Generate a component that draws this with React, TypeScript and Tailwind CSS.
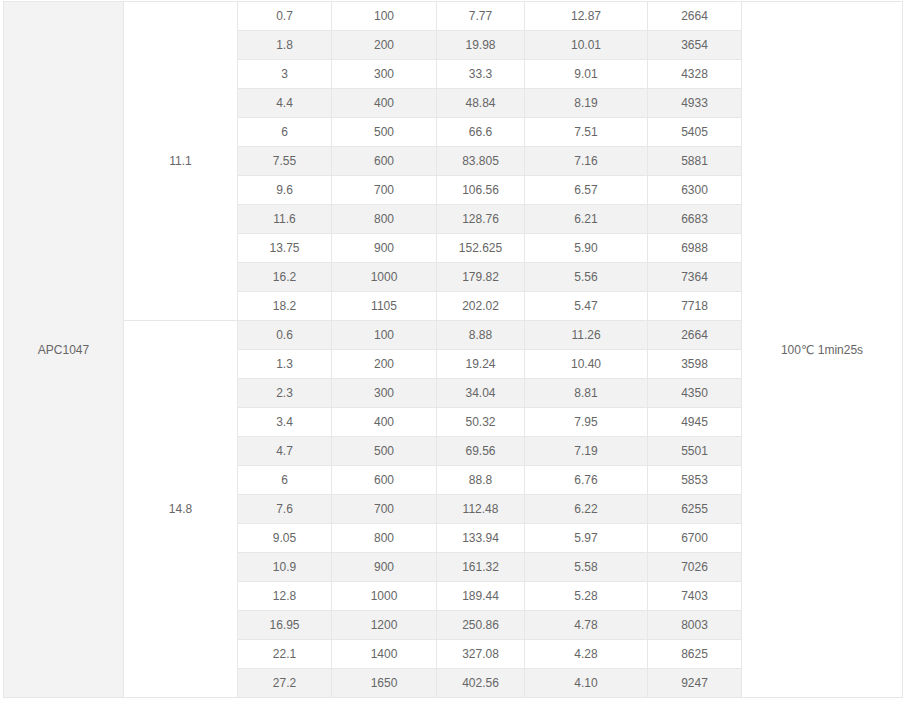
import React from "react";

const g1: string[][] = [
  ["0.7", "100", "7.77", "12.87", "2664"],
  ["1.8", "200", "19.98", "10.01", "3654"],
  ["3", "300", "33.3", "9.01", "4328"],
  ["4.4", "400", "48.84", "8.19", "4933"],
  ["6", "500", "66.6", "7.51", "5405"],
  ["7.55", "600", "83.805", "7.16", "5881"],
  ["9.6", "700", "106.56", "6.57", "6300"],
  ["11.6", "800", "128.76", "6.21", "6683"],
  ["13.75", "900", "152.625", "5.90", "6988"],
  ["16.2", "1000", "179.82", "5.56", "7364"],
  ["18.2", "1105", "202.02", "5.47", "7718"],
];
const g2: string[][] = [
  ["0.6", "100", "8.88", "11.26", "2664"],
  ["1.3", "200", "19.24", "10.40", "3598"],
  ["2.3", "300", "34.04", "8.81", "4350"],
  ["3.4", "400", "50.32", "7.95", "4945"],
  ["4.7", "500", "69.56", "7.19", "5501"],
  ["6", "600", "88.8", "6.76", "5853"],
  ["7.6", "700", "112.48", "6.22", "6255"],
  ["9.05", "800", "133.94", "5.97", "6700"],
  ["10.9", "900", "161.32", "5.58", "7026"],
  ["12.8", "1000", "189.44", "5.28", "7403"],
  ["16.95", "1200", "250.86", "4.78", "8003"],
  ["22.1", "1400", "327.08", "4.28", "8625"],
  ["27.2", "1650", "402.56", "4.10", "9247"],
];

const rows = [...g1, ...g2];

export default function App() {
  return (
    <div className="w-[904px] h-[701px] bg-white pt-px pl-[3px]" style={{ fontFamily: '"Liberation Sans", Arial, "DejaVu Sans", sans-serif' }}>
      <div className="grid w-[900px] grid-cols-[119px_113px_93px_104px_87px_122px_93px_160px] auto-rows-[28px] gap-px bg-[#e7e7e7] p-px text-[12px] text-[#666666]">
        <div className="col-start-1 row-start-1 row-[span_24/span_24] flex items-center justify-center bg-[#f3f3f3]">APC1047</div>
        <div className="col-start-2 row-start-1 row-[span_11/span_11] flex items-center justify-center bg-white">11.1</div>
        <div className="col-start-2 row-start-12 row-[span_13/span_13] flex items-center justify-center bg-white">14.8</div>
        <div className="col-start-8 row-start-1 row-[span_24/span_24] flex items-center justify-center bg-white">100℃ 1min25s</div>
        {rows.map((r, i) =>
          r.map((v, j) => (
            <div
              key={`${i}-${j}`}
              className={`flex items-center justify-center ${i % 2 === 1 ? "bg-[#f2f2f2]" : "bg-white"}`}
              style={{ gridRow: i + 1, gridColumn: j + 3 }}
            >
              {v}
            </div>
          ))
        )}
      </div>
    </div>
  );
}
